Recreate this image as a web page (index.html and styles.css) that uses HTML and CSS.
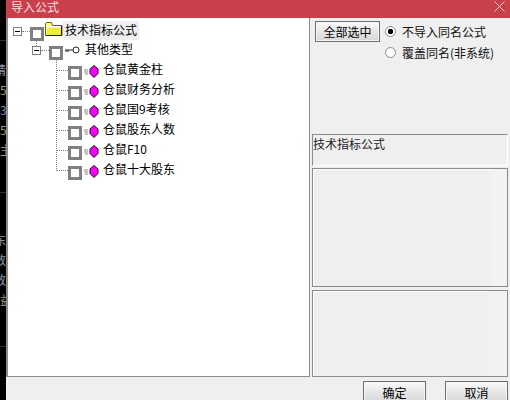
FILE: index.html
```html
<!DOCTYPE html>
<html lang="zh">
<head>
<meta charset="utf-8">
<title>导入公式</title>
<link rel="stylesheet" href="styles.css">
</head>
<body>
<div class="strip">
  <div class="rule rule-a"></div>
  <div class="s s-first cut">精</div>
  <div class="s tan">50</div>
  <div class="s blue">30</div>
  <div class="s tan">50</div>
  <div class="s tan">主力</div>
  <div class="rule rule-b"></div>
  <div class="s s-second cut">东</div>
  <div class="s cut">数</div>
  <div class="s cut">数</div>
  <div class="s tan">益</div>
  <div class="rule rule-c"></div>
</div>
<div class="win">
  <div class="title">
    <span class="title-text">导入公式</span>
    <svg class="close" width="11" height="11" viewBox="0 0 11 11"><path d="M.5.5l10 10M10.500.5l-10 10" stroke="#f2d5d6" stroke-width="1" fill="none"/></svg>
  </div>
  <div class="main">
    <div class="tree">
      <div class="row row-root">
        <span class="exp"></span><span class="dots d8"></span><span class="check"></span>
        <svg class="folder" width="18" height="14" viewBox="0 0 18 14"><path d="M.5 3.500V1.500l1-1h5l1 3h9.500v10H.5z" fill="#ffff66" stroke="#6b5c10"/><path d="M1 4h15v1H1z" fill="#fff"/><path d="M2 6h14v7H2z" fill="#eded3a"/><path d="M16.500 4v9.500H1" stroke="#222" fill="none"/></svg>
        <span class="label label-root">技术指标公式</span>
      </div>
      <div class="row row-type">
        <span class="exp exp-child"></span><span class="dots d8"></span><span class="check"></span>
        <svg class="key" width="15" height="8" viewBox="0 0 15 8"><circle cx="11" cy="4" r="3" fill="#fff" stroke="#222"/><path d="M0 4h8M1 4v2M3 4v2" stroke="#222" fill="none"/></svg>
        <span class="label label-type">其他类型</span>
      </div>
      <div class="leaves">
        <div class="row leaf"><span class="dots d11"></span><span class="check"></span><svg class="gem" width="15" height="13" viewBox="0 0 15 13"><path d="M0 5h4M0 7h4M1 9h3" stroke="#8a8a8a"/><path d="M10 .5l4 3.500v4.500l-4 4-4-4V4z" fill="#f0f" stroke="#111"/><path d="M10 6.500v5" stroke="#c000c0" fill="none"/></svg><span class="label">仓鼠黄金柱</span></div>
        <div class="row leaf"><span class="dots d11"></span><span class="check"></span><svg class="gem" width="15" height="13" viewBox="0 0 15 13"><path d="M0 5h4M0 7h4M1 9h3" stroke="#8a8a8a"/><path d="M10 .5l4 3.500v4.500l-4 4-4-4V4z" fill="#f0f" stroke="#111"/><path d="M10 6.500v5" stroke="#c000c0" fill="none"/></svg><span class="label">仓鼠财务分析</span></div>
        <div class="row leaf"><span class="dots d11"></span><span class="check"></span><svg class="gem" width="15" height="13" viewBox="0 0 15 13"><path d="M0 5h4M0 7h4M1 9h3" stroke="#8a8a8a"/><path d="M10 .5l4 3.500v4.500l-4 4-4-4V4z" fill="#f0f" stroke="#111"/><path d="M10 6.500v5" stroke="#c000c0" fill="none"/></svg><span class="label">仓鼠国9考核</span></div>
        <div class="row leaf"><span class="dots d11"></span><span class="check"></span><svg class="gem" width="15" height="13" viewBox="0 0 15 13"><path d="M0 5h4M0 7h4M1 9h3" stroke="#8a8a8a"/><path d="M10 .5l4 3.500v4.500l-4 4-4-4V4z" fill="#f0f" stroke="#111"/><path d="M10 6.500v5" stroke="#c000c0" fill="none"/></svg><span class="label">仓鼠股东人数</span></div>
        <div class="row leaf"><span class="dots d11"></span><span class="check"></span><svg class="gem" width="15" height="13" viewBox="0 0 15 13"><path d="M0 5h4M0 7h4M1 9h3" stroke="#8a8a8a"/><path d="M10 .5l4 3.500v4.500l-4 4-4-4V4z" fill="#f0f" stroke="#111"/><path d="M10 6.500v5" stroke="#c000c0" fill="none"/></svg><span class="label">仓鼠F10</span></div>
        <div class="row leaf leaf-last"><span class="dots d11"></span><span class="check"></span><svg class="gem" width="15" height="13" viewBox="0 0 15 13"><path d="M0 5h4M0 7h4M1 9h3" stroke="#8a8a8a"/><path d="M10 .5l4 3.500v4.500l-4 4-4-4V4z" fill="#f0f" stroke="#111"/><path d="M10 6.500v5" stroke="#c000c0" fill="none"/></svg><span class="label">仓鼠十大股东</span></div>
      </div>
    </div>
    <div class="side">
      <div class="options">
        <button class="btn btn-all" type="button">全部选中</button>
        <div class="radios">
          <div class="radio-row"><span class="radio on"></span><span>不导入同名公式</span></div>
          <div class="radio-row"><span class="radio"></span><span>覆盖同名(非系统)</span></div>
        </div>
      </div>
      <div class="box box-name">技术指标公式</div>
      <div class="box box-mid"><div class="fill"></div><div class="bar"></div></div>
      <div class="box box-low"><div class="fill"></div><div class="bar bar-wide"></div></div>
    </div>
  </div>
  <div class="footer">
    <button class="btn btn-foot" type="button">确定</button>
    <button class="btn btn-foot" type="button">取消</button>
  </div>
</div>
</body>
</html>
```

FILE: styles.css
```css
* { box-sizing: border-box; }
html, body { margin: 0; padding: 0; }
body {
  width: 510px;
  height: 400px;
  overflow: hidden;
  display: flex;
  background: #000;
  font-family: "Noto Sans CJK SC", "Liberation Sans", sans-serif;
  font-size: 12px;
  color: #111;
}
.strip {
  width: 6px;
  height: 400px;
  flex: none;
  overflow: hidden;
  display: flex;
  flex-direction: column;
}
.rule { height: 1px; width: 6px; background: #2e2e2e; flex: none; }
.rule-a { margin-top: 40px; }
.rule-b { margin-top: 32px; }
.rule-c { margin-top: 36px; }
.s {
  flex: none;
  height: 20px;
  line-height: 20px;
  white-space: nowrap;
  color: #8d9aa6;
}
.cut { margin-left: -6px; }
.tan { color: #a59a78; }
.blue { color: #7d93ad; }
.s-first { margin-top: 19px; }
.s-second { margin-top: 37px; }

.win {
  width: 504px;
  height: 400px;
  flex: none;
  display: flex;
  flex-direction: column;
  background: #efefef;
}
.title {
  height: 18px;
  flex: none;
  background: #c8414a;
  display: flex;
  justify-content: space-between;
  color: #f6dfe0;
  padding: 0 5px 0 5px;
}
.title-text { line-height: 14px; }
.close { margin-top: 1px; }

.main { height: 359px; flex: none; display: flex; }
.tree {
  width: 304px;
  flex: none;
  background: #fff;
  border-left: 2px solid #8c8c8c;
  border-right: 1px solid #8c8c8c;
  border-bottom: 1px solid #8c8c8c;
  padding-top: 3px;
}
.row { display: flex; align-items: flex-start; height: 20px; }
.row-root { height: 19px; padding-left: 5px; }
.row-type { padding-left: 24px; }
.exp {
  width: 9px;
  height: 9px;
  margin-top: 6px;
  flex: none;
  border: 1px solid #808080;
  background: linear-gradient(#000, #000) center / 5px 1px no-repeat #fff;
  position: relative;
}
.exp-child::before {
  content: "";
  position: absolute;
  left: 3px;
  top: -8px;
  height: 7px;
  border-left: 1px dotted #808080;
}
.dots { flex: none; height: 1px; margin-top: 10px; border-top: 1px dotted #808080; }
.d8 { width: 8px; }
.d11 { width: 11px; }
.check {
  width: 14px;
  height: 14px;
  margin-top: 6px;
  flex: none;
  border: 3px solid #808080;
  background: #fff;
}
.folder { margin: 1px 0 0 1px; flex: none; }
.key { margin: 6px 0 0 2px; flex: none; }
.gem { margin: 5px 0 0 2px; flex: none; }
.label { line-height: 18px; margin-left: 4px; white-space: nowrap; color: #000; }
.label-root { margin-left: 0; padding: 0 2px; background: #efefef; height: 19px; }
.label-type { margin-left: 5px; }
.leaves {
  margin-left: 48px;
  border-left: 1px dotted #808080;
  height: 111px;
}
.leaf-last { margin-bottom: -10px; }

.side { flex: 1; padding-left: 2px; display: flex; flex-direction: column; }
.options { height: 116px; flex: none; display: flex; align-items: flex-start; padding: 3px 0 0 3px; }
.btn {
  font: inherit;
  color: #000;
  padding: 0;
  border: 1px solid #707070;
  background: linear-gradient(#fbfbfb, #e6e6e6 50%, #d8d8d8);
  box-shadow: inset 0 0 0 1px #f4f4f4;
}
.btn-all { width: 65px; height: 21px; flex: none; }
.radios { margin: 1px 0 0 5px; display: flex; flex-direction: column; gap: 3px; }
.radio-row { display: flex; align-items: center; height: 18px; gap: 6px; white-space: nowrap; }
.radio {
  width: 11px;
  height: 11px;
  flex: none;
  border-radius: 50%;
  border: 1px solid #8a8a8a;
  background: #fff;
}
.radio.on { background: radial-gradient(circle, #000 0 2.5px, #fff 3px); }
.box { width: 196px; flex: none; border: 1px solid #8c8c8c; }
.box-name { height: 32px; line-height: 18px; padding-left: 0; border-bottom-color: #fff; border-right-color: #fff; color: #222; }
.box-mid { margin-top: 2px; height: 119px; display: flex; box-shadow: inset 1px 1px 0 #fff; }
.box-low { margin-top: 3px; height: 87px; display: flex; box-shadow: inset 1px 1px 0 #fff; }
.fill { flex: 1; }
.bar { width: 17px; background: #f3f2f0; }
.bar-wide { width: 19px; }

.footer { flex: 1; display: flex; gap: 19px; padding: 4px 0 0 357px; }
.btn-foot { width: 63px; height: 22px; flex: none; }
```
